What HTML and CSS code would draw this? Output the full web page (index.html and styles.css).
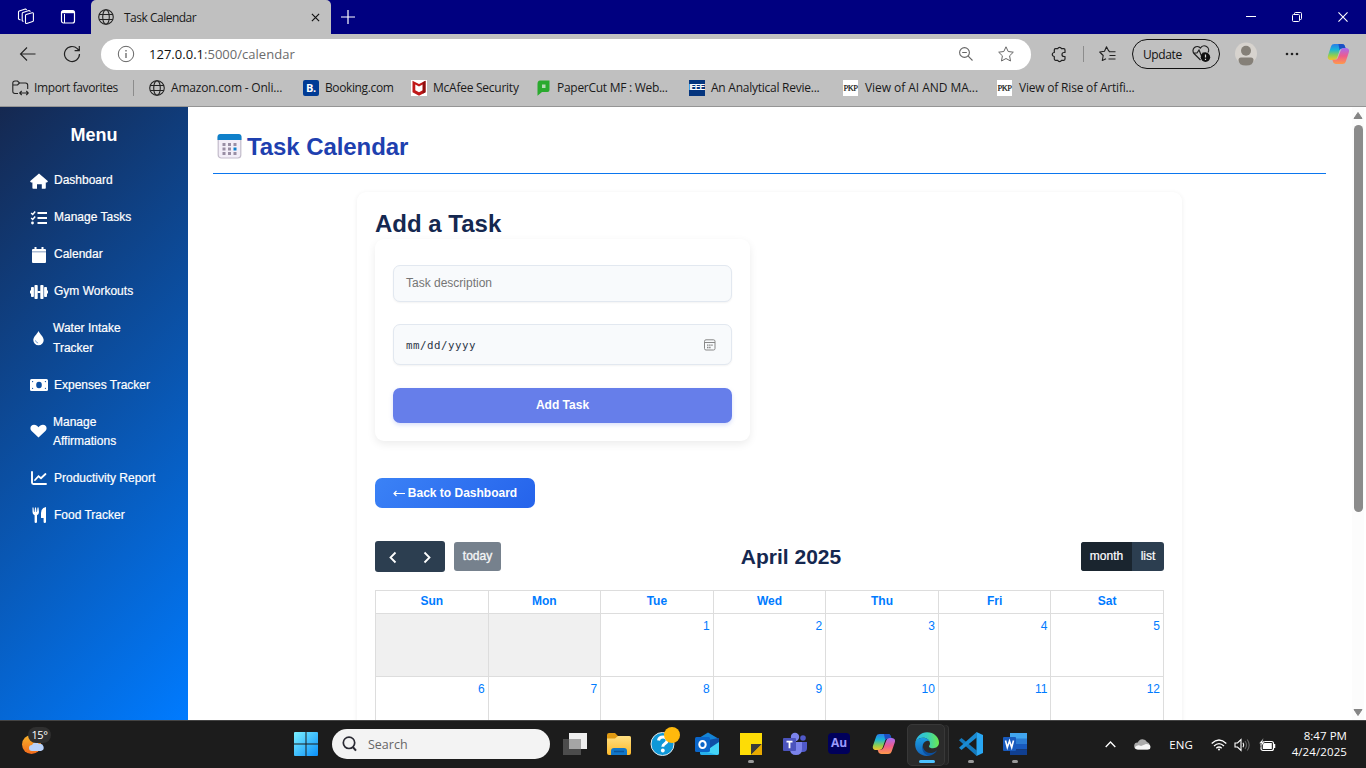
FILE: index.html
```html
<!DOCTYPE html>
<html lang="en">
<head>
<meta charset="utf-8">
<title>Task Calendar</title>
<link rel="stylesheet" href="styles.css">
</head>
<body>
<svg class="defs" width="0" height="0">
  <defs>
    <linearGradient id="cpA" x1="0" y1="0" x2="0" y2="1"><stop offset="0" stop-color="#2a7de8"/><stop offset=".35" stop-color="#18b5d8"/><stop offset=".7" stop-color="#8ccf52"/><stop offset="1" stop-color="#f4c52c"/></linearGradient>
    <linearGradient id="cpB" x1="0" y1="0" x2="0" y2="1"><stop offset="0" stop-color="#a56cf2"/><stop offset=".5" stop-color="#ee5b8e"/><stop offset="1" stop-color="#ff9a4a"/></linearGradient>
    <linearGradient id="win" gradientUnits="userSpaceOnUse" x1="0" y1="0" x2="24" y2="24"><stop offset="0" stop-color="#7af0ff"/><stop offset="1" stop-color="#0a8ffa"/></linearGradient>
    <linearGradient id="moon" x1="0" y1="0" x2="0" y2="1"><stop offset="0" stop-color="#f9b52c"/><stop offset="1" stop-color="#f26a1b"/></linearGradient>
    <linearGradient id="fold" x1="0" y1="0" x2="0" y2="1"><stop offset="0" stop-color="#ffe083"/><stop offset="1" stop-color="#fdb92a"/></linearGradient>
    <linearGradient id="edgeA" x1="0" y1="0" x2="1" y2="0"><stop offset="0" stop-color="#2bb8ee"/><stop offset=".5" stop-color="#36cdbd"/><stop offset="1" stop-color="#6bea4e"/></linearGradient>
    <linearGradient id="edgeB" x1="0" y1="0" x2="0" y2="1"><stop offset="0" stop-color="#1b9de2"/><stop offset="1" stop-color="#1462b7"/></linearGradient>
    <symbol id="globe" viewBox="0 0 16 16"><g fill="none" stroke="#222" stroke-width="1.1"><circle cx="8" cy="8" r="7.3"/><ellipse cx="8" cy="8" rx="3.3" ry="7.3"/><path d="M1.2 5.5h13.6M1.2 10.5h13.6"/></g></symbol>
    <symbol id="copilot" viewBox="0 0 19.3 22" preserveAspectRatio="none"><path fill="url(#cpA)" d="M6.5 1H13c1.6 0 2.3.9 2.7 2.2l.6 2h-2.6c-1.4 0-2.2.7-2.6 2L9 14.600c-.5 1.500-1.200 2.400-3 2.400H3.500C1 17 .2 15 .9 12.500L3.500 3.500C4 1.800 5 1 6.500 1z"/><path fill="#1b4fc4" d="M10 1h3c1.600 0 2.300.900 2.700 2.200l.6 2h-2.600c-1.400 0-2.200.7-2.600 2z"/><path fill="url(#cpB)" d="M13.500 21H8c-1.600 0-2.300-.9-2.700-2.200l-.6-2H7c1.400 0 2.200-.7 2.600-2L12 7.400c.5-1.500 1.200-2.400 3-2.400h1.500c2.500 0 3.300 2 2.600 4.500l-2.600 9c-.5 1.700-1.500 2.500-3 2.500z"/></symbol>
  </defs>
</svg>
<div class="screen">
  <header class="titlebar">
    <svg class="ws" width="18" height="18" viewBox="0 0 18 18" fill="none" stroke="#fff" stroke-width="1.100" stroke-linejoin="round"><path d="M8.500 7.500q0-.8.700-1l6-1.700q1.200-.3 1.200.9v6.800q0 .8-.7 1l-6 2q-1.200.3-1.200-.9zM6.500 13.500l-1.300-.7V5.700q0-.8.800-1.100l6-2 1.500.8M3.500 12l-2-1V4q0-.8.800-1.100l6-2 1.500.8"/></svg>
    <svg class="tabs" width="16" height="16" viewBox="0 0 16 16" fill="none" stroke="#fff"><rect x="1.500" y="1.500" width="13" height="12.500" rx="2" stroke-width="1.200"/><path d="M2 3h12" stroke-width="2.400"/><path d="M4.500 5v9"/></svg>
    <div class="tab"><svg width="16" height="16"><use href="#globe"/></svg><span class="ui t-tab">Task Calendar</span><svg class="tabx" width="9" height="9" viewBox="0 0 10 10" stroke="#111" stroke-width="1.300"><path d="M1 1l8 8M9 1L1 9"/></svg></div>
    <svg class="plus" width="14" height="14" viewBox="0 0 14 14" stroke="#fff" stroke-width="1.200"><path d="M7 0v14M0 7h14"/></svg>
    <div class="winctl">
      <svg width="10" height="10" viewBox="0 0 10 10" stroke="#fff"><path d="M0 4.500h10"/></svg>
      <svg width="10" height="10" viewBox="0 0 10 10" fill="none" stroke="#fff"><rect x=".5" y="2.500" width="7" height="7" rx="1"/><path d="M2.500 2V1.500q0-1 1-1h5q1 0 1 1v5q0 1-1 1H8"/></svg>
      <svg width="10" height="10" viewBox="0 0 11 11" stroke="#fff" stroke-width="1.200"><path d="M.5.5l10 10M10.500.5l-10 10"/></svg>
    </div>
  </header>
  <div class="toolbar">
    <svg class="back" width="17" height="16" viewBox="0 0 17 16" fill="none" stroke="#222" stroke-width="1.100"><path d="M16.500 8H1.500M8 1.500L1.500 8 8 14.500"/></svg>
    <svg class="reload" width="18" height="18" viewBox="0 0 18 18" fill="none" stroke="#222" stroke-width="1.200"><path d="M16.500 9a7.500 7.500 0 1 1-2.200-5.300L16 5.500M16.300 1v4.700h-4.700"/></svg>
    <div class="address">
      <svg width="18" height="18" viewBox="0 0 18 18" fill="none" stroke="#666"><circle cx="9" cy="9" r="7.700"/><path d="M9 8v5M9 5v1.500" stroke-width="1.300"/></svg>
      <span class="ui url"><b>127.0.0.1</b>:5000/calendar</span>
      <svg class="mag" width="14" height="14" viewBox="0 0 14 14" fill="none" stroke="#666" stroke-width="1.100"><circle cx="5.500" cy="5.500" r="4.900"/><path d="M9.200 9.200L13.500 13.500M3.200 5.500h4.600"/></svg>
      <svg class="star" width="16" height="16" viewBox="0 0 16 16" fill="none" stroke="#666" stroke-linejoin="round"><path d="M8 .8l2.200 4.700 5.100.7-3.700 3.600.9 5.200L8 12.500 3.500 15l.9-5.200L.7 6.200l5.100-.7z"/></svg>
    </div>
    <svg class="puz" width="16" height="17" viewBox="0 0 16 17" fill="none" stroke="#222" stroke-width="1.200" stroke-linejoin="round"><path d="M4.500 2.700h2.200a2 2 0 0 1 3.800 0h2.300q1.200 0 1.200 1.200v2.600h-1a2 2 0 0 0 0 4h1v2.600q0 1.200-1.200 1.200h-2.300a2 2 0 0 1-3.800 0H4.500q-1.200 0-1.200-1.200v-2.600a2 2 0 0 1 0-4V3.900q0-1.200 1.200-1.200z"/></svg>
    <i class="vsep"></i>
    <svg class="fav" width="17" height="16" viewBox="0 0 17 16" fill="none" stroke="#222" stroke-width="1.100" stroke-linejoin="round"><path d="M11 5.200l-1.300-.2L7.500.8l-2 4.500-4.800.7 3.500 3.500-.9 5L7 12.700M10 5.800h6.500M10.500 9.500h6M9.500 13h7"/></svg>
    <div class="update"><span class="ui t-upd">Update</span><svg width="19" height="18" viewBox="0 0 19 18" fill="none" stroke="#222" stroke-width="1.200"><path d="M8.500 15L2 8.500A4.200 4.200 0 0 1 8.500 3a4.200 4.200 0 0 1 7.500 4.500M1 8h4l2-3 2.500 6L11 8h3"/><circle cx="13.500" cy="12.300" r="4.700" fill="#111" stroke="none"/><path d="M13.500 9.500v3M13.500 13.800v1.200" stroke="#ddd"/></svg></div>
    <svg class="user" width="22" height="24" viewBox="0 0 22 24"><circle cx="11" cy="11.500" r="11" fill="#d7d3ce"/><circle cx="11" cy="8.800" r="5" fill="#858078"/><path d="M3.500 18q0-2.500 2.500-2.500h10q2.500 0 2.500 2.500 0 5.500-7.500 5.500T3.500 18z" fill="#858078"/></svg>
    <svg class="dots" width="14" height="4" viewBox="0 0 14 4" fill="#222"><circle cx="2" cy="2" r="1.300"/><circle cx="7" cy="2" r="1.300"/><circle cx="12" cy="2" r="1.300"/></svg>
    <svg class="cop" width="22" height="22"><use href="#copilot"/></svg>
  </div>
  <nav class="bookmarks ui">
    <span class="bm b1"><svg width="17" height="16" viewBox="0 0 17 16" fill="none" stroke="#222" stroke-width="1.100"><path d="M6 13.500H3q-2.200 0-2.200-2.200V3.200Q.8 1 3 1h2.500L7.500 3h6q2.200 0 2.200 2.200V9M1 5h4.500l2-2M8 13h8M9.700 11L7.700 13l2 2M14.300 11l2 2-2 2"/></svg><span>Import favorites</span></span>
    <i class="bsep"></i>
    <span class="bm b2"><svg width="16" height="16"><use href="#globe"/></svg><span>Amazon.com - Onli...</span></span>
    <span class="bm b3"><i class="book">B.</i><span>Booking.com</span></span>
    <span class="bm b4"><svg width="16" height="16" viewBox="0 0 16 16"><path fill="#fff" d="M0 0h16v16H0z"/><path d="M1.500.8L8 4l6.500-3.200v11.400L8 15.700l-6.500-3.500z" fill="#c01818"/><path d="M4.300 4.500L8 6.500l3.700-2v5.700L8 12.300l-3.700-2.100z" fill="#fff"/><path d="M11.700 2.200L14.500.8v11.400l-2.800 1.500z" fill="#8e1010"/></svg><span>McAfee Security</span></span>
    <span class="bm b5"><svg width="13" height="16" viewBox="0 0 13 16"><path d="M3 .5h9.500V10q0 2-2 2H5l-4.500 3.700V4Q.5.500 3 .5z" fill="#2aaa2e"/><rect x="5" y="4.500" width="3.500" height="3.500" fill="#b5dbb6"/></svg><span>PaperCut MF : Web...</span></span>
    <span class="bm b6"><i class="ieee">IEEE</i><span>An Analytical Revie...</span></span>
    <span class="bm b7"><i class="pkp">PKP</i><span>View of AI AND MA...</span></span>
    <span class="bm b8"><i class="pkp">PKP</i><span>View of Rise of Artifi...</span></span>
  </nav>

  <div class="viewport">
    <aside class="sidebar">
      <h2>Menu</h2>
      <a><svg viewBox="0 0 18 16" width="18" height="16"><path fill="#fff" d="M9 .5L18 8.300 17 9.500h-1.200V15q0 .8-.8.8h-3.200v-4.600H7v4.600H3.200q-.8 0-.8-.8V9.500H1L0 8.300z"/></svg><span>Dashboard</span></a>
      <a><svg viewBox="0 0 18 16" width="18" height="16"><path d="M1.200 3l1.500 1.500L5.200 1.500M1.200 8l1.500 1.500L5.200 6.500" fill="none" stroke="#fff" stroke-width="1.500"/><path d="M7.500 3H17M7.500 8H17M7.500 13H17" stroke="#fff" stroke-width="2"/><circle cx="2.500" cy="13" r="1.400" fill="#fff"/></svg><span>Manage Tasks</span></a>
      <a><svg viewBox="0 0 18 16" width="18" height="16"><path fill="#fff" d="M4.500 0h2v2h5V0h2v2H15q1 0 1 1v1.500H2V3q0-1 1-1h1.500z"/><path fill="#d5ddea" d="M2 4.500h14V6H2z"/><path fill="#fff" d="M2 6h14v9q0 1-1 1H3q-1 0-1-1z"/></svg><span>Calendar</span></a>
      <a><svg viewBox="0 0 18 16" width="18" height="16" fill="#fff"><rect x="4.500" y="1" width="3.200" height="14" rx=".8"/><rect x="10.300" y="1" width="3.200" height="14" rx=".8"/><rect x="1" y="3" width="2.900" height="10" rx=".8"/><rect x="14.100" y="3" width="2.900" height="10" rx=".8"/><path d="M0 6.500h1.300v3H0zM16.700 6.500H18v3h-1.300zM7.400 7h3.200v2H7.400z"/></svg><span>Gym Workouts</span></a>
      <a class="two"><svg viewBox="0 0 18 16" width="17" height="16"><path fill="#fff" d="M9 .5c1.500 3.500 5.500 6 5.500 9.700a5.500 5.500 0 0 1-11 0C3.500 6.500 7.500 4 9 .5z"/><path d="M5.800 10.500q.4 2.400 2.800 2.800" fill="none" stroke="#5f8fcb" stroke-width=".9"/></svg><span>Water Intake<br>Tracker</span></a>
      <a><svg viewBox="0 0 18 16" width="18" height="16"><rect y="2" width="18" height="12" rx="1.500" fill="#fff"/><ellipse cx="9" cy="8" rx="2.800" ry="3.200" fill="#0b4fa3"/><path d="M2 4h1.500L2 5.500zM16 4v1.500L14.500 4zM2 12v-1.500L3.500 12zM16 12h-1.500l1.500-1.500z" fill="#0b4fa3"/></svg><span>Expenses Tracker</span></a>
      <a class="two"><svg viewBox="0 0 18 16" width="17" height="16"><path fill="#fff" d="M9 15L1.700 8C-1 5 1 1.500 4.300 1.500c2 0 3.500 1 4.700 2.500 1.200-1.500 2.700-2.500 4.700-2.500C17 1.500 19 5 16.300 8z"/></svg><span>Manage<br>Affirmations</span></a>
      <a><svg viewBox="0 0 18 16" width="18" height="16" fill="none" stroke="#fff" stroke-width="1.900" stroke-linecap="round"><path d="M2 2v10.500q0 1.500 1.500 1.500H16"/><path d="M5 10l3.500-3.800 2.500 2L15.500 4" stroke-width="1.800"/></svg><span>Productivity Report</span></a>
      <a><svg viewBox="0 0 18 16" width="18" height="16" fill="#fff"><path d="M2.500.5h1L4 5h.5L5 .5h1L6.500 5H7L7.500.5h1L9 5q0 2.500-2 3.300V15q0 1-1.200 1t-1.200-1V8.300q-2.100-.8-2.100-3.300zM16 0v15q0 1-1.200 1t-1.200-1v-4H11V6q0-5 5-6z"/></svg><span>Food Tracker</span></a>
    </aside>
    <main class="main">
      <h1><svg width="25" height="25" viewBox="0 0 24 25"><rect x=".7" y=".7" width="22.600" height="23.300" rx="3" fill="#f3eef8" stroke="#c3bccb" stroke-width="1.200"/><path d="M0 6V3q0-3 3-3h18q3 0 3 3v3z" fill="#0f80ca"/><path fill="#998ea4" d="M5 9h3v3H5zM10.500 9h3v3h-3zM16 9h3v3h-3zM5 13.500h3v3H5zM10.500 13.500h3v3h-3zM5 18h3v3H5zM10.500 18h3v3h-3zM16 18h3v3h-3z"/><path fill="#0f80ca" d="M16 13.500h3v3h-3z"/></svg><span>Task Calendar</span></h1>
      <section class="card">
        <h2>Add a Task</h2>
        <form class="form">
          <div class="field desc">Task description</div>
          <div class="field date"><span>mm/dd/yyyy</span><svg width="12" height="12" viewBox="0 0 12 12" fill="none" stroke="#888"><rect x=".5" y=".8" width="10.500" height="10.200" rx="1.500"/><path d="M1 3.500h10"/><path d="M3 6.200h6M3 8.500h4" stroke-dasharray="1.500 .6" stroke-width="1.300"/></svg></div>
          <div class="submit">Add Task</div>
        </form>
        <a class="backbtn"><svg width="12" height="8" viewBox="0 0 12 8" fill="none" stroke="#fff" stroke-width="1.200"><path d="M12 4.500H1M3.500 2L1 4.500 3.500 7"/></svg>Back to Dashboard</a>
        <div class="caltool">
          <div class="left"><div class="nav"><svg width="35" height="31" viewBox="0 0 35 31" fill="none" stroke="#fff" stroke-width="1.800"><path d="M20.500 11.500l-5 5 5 5"/></svg><svg width="35" height="31" viewBox="0 0 35 31" fill="none" stroke="#fff" stroke-width="1.800"><path d="M14.500 11.500l5 5-5 5"/></svg></div><span class="today">today</span></div>
          <h3>April 2025</h3>
          <div class="views"><span class="on">month</span><span>list</span></div>
        </div>
        <table class="cal">
          <thead><tr><th>Sun</th><th>Mon</th><th>Tue</th><th>Wed</th><th>Thu</th><th>Fri</th><th>Sat</th></tr></thead>
          <tbody>
            <tr><td class="off"></td><td class="off"></td><td>1</td><td>2</td><td>3</td><td>4</td><td>5</td></tr>
            <tr><td>6</td><td>7</td><td>8</td><td>9</td><td>10</td><td>11</td><td>12</td></tr>
          </tbody>
        </table>
      </section>
    </main>
    <div class="scroll"><svg width="10" height="8" viewBox="0 0 10 8"><path d="M5 0.500L9 6.500H1z" fill="#858585" stroke="#858585" stroke-linejoin="round"/></svg><i></i><svg width="10" height="8" viewBox="0 0 10 8"><path d="M5 7.500L1 1.500h8z" fill="#858585" stroke="#858585" stroke-linejoin="round"/></svg></div>
  </div>

  <footer class="taskbar ui">
    <div class="weather"><svg width="24" height="24" viewBox="0 0 24 24"><circle cx="9.500" cy="12.500" r="9.500" fill="url(#moon)"/><path d="M10 19a3 3 0 0 1 0-6 4 4 0 0 1 7-1 3.500 3.500 0 0 1 2 7z" fill="#b9d2fa"/></svg><span>15°</span></div>
    <svg class="start" width="24" height="24" viewBox="0 0 24 24" fill="url(#win)"><path d="M0 1q0-1 1-1h10.500v11.500H0zM12.500 0H23q1 0 1 1v10.500H12.500zM0 12.500h11.500V24H1q-1 0-1-1zM12.500 12.500H24V23q0 1-1 1H12.500z"/></svg>
    <div class="search"><svg width="15" height="16" viewBox="0 0 15 16" fill="none" stroke="#2a2a33" stroke-width="1.700"><circle cx="7" cy="6.800" r="5.700"/><path d="M10.800 11l3.200 3.700" stroke-width="2"/></svg><span>Search</span></div>
    <div class="apps">
      <span class="app"><svg width="26" height="24" viewBox="0 0 26 24"><rect x="7" y="1" width="18" height="16" fill="#eee"/><rect x="1" y="7" width="18" height="16" fill="#555" fill-opacity=".85"/><path d="M7 7h12v10H7z" fill="#a5a5a5"/></svg></span>
      <span class="app"><svg width="26" height="24" viewBox="0 0 26 24"><path d="M1 3q0-2 2-2h6l3 3h11q2 0 2 2v4H1z" fill="#e09a12"/><path d="M1 6.500h8l3-2.500h11q2 0 2 2v15q0 2-2 2H3q-2 0-2-2z" fill="url(#fold)"/><path d="M5 23v-4q0-3 3-3h10q3 0 3 3v4z" fill="#1277c9"/><path d="M8 19.500h10" stroke="#0b559b" stroke-width="1.500"/></svg></span>
      <span class="app help"><svg width="30" height="30" viewBox="0 0 30 30"><circle cx="12.500" cy="17" r="11.500" fill="#0f98d8" stroke="#e8e8e8"/><path d="M8.500 13.500q.5-3.500 4.500-3.500 4.200 0 4.200 3.300 0 2-2.400 3.400-2 1.200-2 3" fill="none" stroke="#fff" stroke-width="3"/><circle cx="12.800" cy="23.500" r="1.900" fill="#fff"/><circle cx="22" cy="8" r="8" fill="#ffb90c"/></svg></span>
      <span class="app"><svg width="26" height="24" viewBox="0 0 26 24"><path d="M5 6l9-5.500L25 7v14q0 2-2 2H8q-2 0-2-2z" fill="#1484d6"/><path d="M25 8v13q0 2-2 2H8z" fill="#43d4f7"/><path d="M14 8l11-2v4L13 18z" fill="#0f4ea5"/><path d="M6 18l17 5H8q-2 0-2-2z" fill="#26b1ed"/><rect x="1" y="5" width="15" height="15" rx="1.500" fill="#0a66c9"/><ellipse cx="8.500" cy="12.500" rx="3.200" ry="3.600" fill="none" stroke="#fff" stroke-width="2"/></svg></span>
      <span class="app run"><svg width="24" height="24" viewBox="0 0 24 24"><path d="M1 1h22v22H1z" fill="#fddc06"/><path d="M12 12h11L12 23z" fill="#3b3a39"/><path d="M23 12v11H12z" fill="#e8a900"/></svg></span>
      <span class="app"><svg width="26" height="24" viewBox="0 0 26 24"><circle cx="13" cy="5" r="4.200" fill="#7b83eb"/><circle cx="21" cy="6" r="2.800" fill="#5059c9"/><path d="M17 10h8v6q0 4-4 4h-4z" fill="#5059c9"/><path d="M8 10h12v7q0 6-6 6t-6-6z" fill="#7b83eb"/><rect x="1" y="6" width="13" height="13" rx="1" fill="#4b53bc"/><path d="M4.500 9.700h6M7.500 9.700v6.500" stroke="#fff" stroke-width="1.800"/></svg></span>
      <span class="app"><i class="au">Au</i></span>
      <span class="app"><svg width="23" height="22"><use href="#copilot"/></svg></span>
      <span class="app run active"><svg width="24" height="24" viewBox="0 0 24 24"><path d="M.3 11C1.300 4.500 6 .3 12 .3c7 0 12 5 12 10.300 0 4-3 5.600-5.800 5.600-2.500 0-4.200-.9-4.200-1.800 0-.7 1-1.100 1-2.800C15 8.500 12 5.800 8 5.800 4.500 5.800 1.500 7.500.3 11z" fill="url(#edgeA)"/><path d="M.2 12C.5 8 4 5.800 8 5.800c3 0 5.500 1.500 6.500 3.500-1-.6-2-.7-3-.3-3 1-4.500 4-3.500 7.500 1 3.500 3.500 6 7 7C7 25.500-.3 20 .2 12z" fill="url(#edgeB)"/><path d="M9.500 9.800c-4 4-.5 11.500 6.500 11.200 2.500-.1 5-1.500 6.500-3.500-2 4-5.500 6-8.500 6.200-6-.7-9-8-4.500-13.900z" fill="#0b4f9e"/></svg></span>
      <span class="app run"><svg width="24" height="24" viewBox="0 0 24 24"><path d="M0 8.200L2.500 6l15.200 12.500V24z" fill="#1479bd"/><path d="M0 15.800L2.500 18 17.700 5.500V0z" fill="#1a8bd3"/><path d="M17.500 0L24 3v18l-6.500 3z" fill="#29a7f3"/></svg></span>
      <span class="app run"><svg width="26" height="24" viewBox="0 0 26 24"><path d="M8 1h17v6H8z" fill="#41a5ee"/><path d="M8 6.500h17V12H8z" fill="#2b7cd3"/><path d="M8 12h17v5.500H8z" fill="#185abd"/><path d="M8 17.500h17V23H8z" fill="#103f91"/><rect x="1" y="5" width="13" height="14" rx="1" fill="#185abd"/><path d="M3.500 8.500l1.800 7 2.200-6.500 2.200 6.500 1.800-7" fill="none" stroke="#fff" stroke-width="1.600"/></svg></span>
    </div>
    <div class="tray">
      <svg class="chev" width="11" height="7" viewBox="0 0 11 7" fill="none" stroke="#fff" stroke-width="1.300"><path d="M.7 6l4.800-5 4.800 5"/></svg>
      <svg class="cloud" width="17" height="11" viewBox="0 0 17 11"><path d="M3.500 10.500a3.500 3.500 0 0 1 .3-7A5 5 0 0 1 13 3a4 4 0 0 1 .5 7.500z" fill="#aaa"/><path d="M4 10.500Q1 10.500 1 8q3-3 6-1l5-2q4.500 0 4.500 3t-3 2.500z" fill="#f5f5f5"/></svg>
      <span class="eng">ENG</span>
      <svg class="wifi" width="16" height="12" viewBox="0 0 16 12" fill="none" stroke="#fff" stroke-width="1.300"><path d="M.7 4.500q7.300-7 14.600 0M3 7q5-4.700 10 0M5.300 9.300q2.700-2.500 5.400 0"/><circle cx="8" cy="10.500" r="1" fill="#fff" stroke="none"/></svg>
      <svg class="vol" width="17" height="14" viewBox="0 0 17 14" fill="none" stroke="#fff" stroke-width="1.100"><path d="M1 5h2.500L7 1.500v11L3.500 9H1zM9 4.800q1.500 2.200 0 4.400"/><path d="M11 3q3 4 0 8M13.200 1.500q4 5.500 0 11" stroke="#666"/></svg>
      <svg class="bat" width="17" height="14" viewBox="0 0 17 14"><rect x="2" y="3.500" width="12.500" height="9" rx="2" fill="none" stroke="#fff" stroke-width="1.200"/><rect x="3.800" y="5" width="9" height="6" fill="#fff"/><path d="M15.500 6v4" stroke="#fff" stroke-width="1.500"/><path d="M4.500 0L0 5.500h2.500L1 9.500 6 4H3.500z" fill="#fff" stroke="#1c1c1c" stroke-width=".5"/></svg>
      <div class="clock"><span class="t1">8:47 PM</span><span class="t2">4/24/2025</span></div>
    </div>
  </footer>
</div>
</body>
</html>
```
FILE: styles.css
```css
* { box-sizing: border-box; }
body { margin: 0; overflow: hidden; font-family: "Liberation Sans", Arial, sans-serif; }
.defs { position: absolute; }
svg { display: block; flex: none; }
i { font-style: normal; flex: none; }
.ui { font-family: "Open Sans", "Noto Sans", sans-serif; white-space: nowrap; }
.screen { width: 1366px; height: 768px; display: flex; flex-direction: column; overflow: hidden; background: #fff; }

/* Browser chrome */
.titlebar { height: 34px; flex: none; background: #000080; display: flex; align-items: center; }
.ws { margin-left: 17px; }
.tabs { margin-left: 25px; }
.tab { width: 240px; height: 34px; margin-left: 15px; background: #c0c0c0; border-radius: 5px 5px 0 0; display: flex; align-items: center; padding: 0 11px 0 7px; color: #1a1a1a; }
.t-tab { font-size: 12px; letter-spacing: -.5px; margin-left: 10px; }
.tabx { margin-left: auto; }
.plus { margin-left: 10px; }
.winctl { margin-left: auto; margin-right: 18px; display: flex; align-items: center; gap: 36px; }
.toolbar { height: 40px; flex: none; background: #c0c0c0; display: flex; align-items: center; }
.back { margin-left: 19px; }
.reload { margin-left: 27px; }
.address { width: 930px; height: 31px; margin-left: 20px; background: #fff; border-radius: 16px; display: flex; align-items: center; padding: 0 17px 0 16px; }
.url { font-size: 13px; margin-left: 14px; color: #6b6b6b; letter-spacing: .02px; }
.url b { font-weight: 400; color: #111; }
.mag { margin-left: auto; }
.star { margin-left: 25px; }
.puz { margin-left: 20px; }
.vsep { width: 1px; height: 16px; background: #8c8c8c; margin-left: 16px; }
.fav { margin-left: 15px; }
.update { width: 88px; height: 30px; border: 1px solid #111; border-radius: 15px; margin-left: 16px; display: flex; align-items: center; justify-content: space-between; padding: 0 8px 0 10px; }
.t-upd { font-size: 12px; letter-spacing: -.4px; color: #111; }
.user { margin-left: 15px; }
.dots { margin-left: 28px; }
.cop { margin-left: 28px; }
.bookmarks { height: 33px; flex: none; background: #c0c0c0; border-bottom: 1px solid #959595; display: flex; align-items: center; font-size: 12px; color: #1a1a1a; padding: 0 0 5px 12px; }
.bookmarks { letter-spacing: -.38px; }
.bm { display: flex; align-items: center; gap: 6px; }
.b1 { width: 121px; gap: 5px; }
.bsep { width: 1px; height: 16px; background: #8c8c8c; margin-right: 15px; }
.b2 { width: 154px; letter-spacing: -.2px; }
.b3 { width: 108px; }
.b4 { width: 126px; letter-spacing: -.25px; }
.b5 { width: 152px; gap: 7px; letter-spacing: -.28px; }
.b6 { width: 154px; letter-spacing: -.25px; }
.b7 { width: 154px; letter-spacing: -.05px; }
.b8 { letter-spacing: -.2px; }
.book { width: 16px; height: 16px; border-radius: 2px; background: #003b95; color: #fff; font: bold 11px/16px "Open Sans", sans-serif; text-align: center; }
.ieee { width: 16px; height: 16px; background: #05357e; color: #fff; font: bold 8.5px/15px "Liberation Sans", sans-serif; display: flex; justify-content: center; letter-spacing: -1.1px; padding-right: 1px; }
.pkp { width: 15px; margin-right: 1px; height: 16px; background: #fff; color: #111; font: 8.5px/16px "Liberation Serif", serif; -webkit-text-stroke: .2px #111; display: flex; justify-content: center; letter-spacing: -.6px; }

/* Page */
.viewport { height: 613px; flex: none; display: flex; overflow: hidden; background: #fff; }
.sidebar { width: 188px; flex: none; background: linear-gradient(135deg, #152850, #007bff); color: #fff; }
.sidebar h2 { margin: 16px 0 17px; font-size: 18px; line-height: 24px; text-align: center; }
.sidebar a { height: 37px; margin-left: 30px; display: flex; align-items: center; gap: 6px; font-size: 12px; line-height: 19.2px; -webkit-text-stroke: .2px #fff; padding-bottom: 3px; }
.sidebar a.two { height: 56.3px; }
.sidebar svg { margin-bottom: 1px; }
.main { width: 1164px; padding: 24px 26px 0 25px; flex: none; }
.main h1 { margin: 0; height: 43px; border-bottom: 1px solid #0b76ee; display: flex; align-items: flex-start; padding-left: 4px; gap: 5px; font-size: 24px; line-height: 32px; color: #1e40af; letter-spacing: -.08px; }
.main h1 svg { margin-top: 3px; }
.card { margin: 18px 0 0 144px; width: 825px; height: 700px; border-radius: 9px; padding: 17px 18px 18px; box-shadow: 0 1px 5px rgba(0,0,0,.07); background: #fff; }
.card h2 { margin: 0; font-size: 24px; line-height: 30px; color: #152850; }
.form { width: 375px; height: 202px; border-radius: 9px; box-shadow: 0 3px 9px rgba(0,0,0,.08); padding: 26px 18px 0; }
.field { border: 1px solid #e2e8f0; border-radius: 7px; background: #f8fafc; box-shadow: 0 1px 2px rgba(0,0,0,.05); padding: 0 12px; font-size: 12px; }
.desc { height: 37px; line-height: 34px; color: #757575; }
.date { height: 41px; margin-top: 22px; display: flex; align-items: center; justify-content: space-between; padding-right: 15px; color: #2d3748; font: 10.8px "DejaVu Sans Mono", monospace; letter-spacing: .5px; }
.date span { padding-top: 1px; }
.submit { height: 35px; margin-top: 23px; border-radius: 7px; background: #667eea; color: #fff; font-weight: bold; font-size: 12px; line-height: 34px; text-align: center; box-shadow: 0 2px 4px rgba(102,126,234,.25); }
.backbtn { width: 160px; height: 30px; margin-top: 37px; border-radius: 7px; background: linear-gradient(135deg, #3b82f6, #2563eb); color: #fff; font-weight: bold; font-size: 12px; display: flex; align-items: center; justify-content: center; gap: 3px; }
.caltool { margin-top: 33px; height: 31px; display: flex; align-items: center; justify-content: space-between; }
.left { display: flex; align-items: center; width: 126px; }
.nav { display: flex; background: #2c3e50; border-radius: 3px; }
.today { width: 47px; height: 29px; margin-left: 9px; background: #76818d; border-radius: 3px; color: #f4f5f6; font-size: 12px; line-height: 28px; text-align: center; -webkit-text-stroke: .35px #f4f5f6; }
.caltool h3 { margin: 0 auto 0 219px; font-size: 21px; color: #152850; line-height: 28px; width: 142px; text-align: center; white-space: nowrap; }
.views { display: flex; height: 29px; color: #fff; font-size: 12px; line-height: 28px; background: #2c3e50; border-radius: 3px; overflow: hidden; -webkit-text-stroke: .2px #fff; }
.views span { width: 32px; text-align: center; }
.views .on { width: 51px; background: #1a252f; }
.cal { width: 789px; margin-top: 18px; border-collapse: collapse; table-layout: fixed; font-size: 12px; color: #007bff; }
.cal th, .cal td { border: 1px solid #ddd; padding: 0; }
.cal th { height: 23px; line-height: 19px; padding-bottom: 2px; }
.cal td { height: 63px; vertical-align: top; text-align: right; padding: 3px 3px 0 0; line-height: 19px; }
.cal .off { background: #f0f0f0; }
.scroll { width: 12px; background: #fcfcfc; display: flex; flex-direction: column; align-items: center; padding: 5px 0 4px; justify-content: space-between; }
.scroll i { width: 9px; height: 387px; border-radius: 5px; background: #8b8b8b; margin-bottom: 191px; }

/* Taskbar */
.taskbar { height: 48px; flex: none; background: #1c1c1c; border-top: 1px solid #444; display: flex; align-items: center; color: #fff; }
.weather { position: relative; width: 30px; margin-left: 22px; margin-bottom: 2px; }
.weather span { position: absolute; left: 6px; top: -5px; width: 23px; height: 16px; border-radius: 8px; background: #2f2f2f; font-size: 11px; line-height: 15px; text-align: center; letter-spacing: -.4px; }
.start { margin: 0 0 1px 242px; }
.search { width: 218px; height: 30px; margin: 0 0 1px 14px; border-radius: 15px; background: #f3f3f3; color: #666; display: flex; align-items: center; gap: 11px; padding-left: 10px; font-size: 12.5px; }
.apps { display: flex; margin-left: 3px; }
.app { width: 44px; height: 47px; display: flex; align-items: center; justify-content: center; position: relative; padding-bottom: 1px; }
.help { padding: 0 0 5px 3px; }
.run::after { content: ""; position: absolute; bottom: 5px; left: 19px; width: 6px; height: 3px; border-radius: 2px; background: #999; }
.active::after { left: 14px; width: 16px; background: #4cc2ff; }
.active::before { content: ""; position: absolute; z-index: -1; left: 2px; top: 3px; width: 36px; height: 40px; border: 1px solid #383838; border-radius: 5px; background: #2b2b2b; box-shadow: 4px 0 0 -1px #252525, 5px 0 0 -1px #363636; }
.active { isolation: isolate; }
.au { width: 22px; height: 21px; border-radius: 4px; background: #00005b; color: #9b9bfb; font: bold 12px/20px "Open Sans", sans-serif; text-align: center; margin-bottom: 1px; }
.tray { margin-left: auto; display: flex; align-items: center; padding-right: 19px; }
.chev { margin-right: 1px; }
.cloud { margin-left: 17px; }
.eng { margin-left: 18px; font-size: 11.5px; letter-spacing: .1px; }
.wifi { margin-left: 18px; }
.vol { margin-left: 7px; }
.bat { margin-left: 8px; }
.clock { width: 71px; display: flex; flex-direction: column; align-items: flex-end; font-size: 11.5px; line-height: 16px; letter-spacing: .05px; padding-bottom: 1px; }
.t2 { letter-spacing: .1px; }
```
